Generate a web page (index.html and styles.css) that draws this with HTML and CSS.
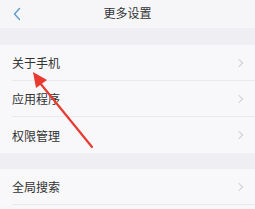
FILE: index.html
```html
<!DOCTYPE html>
<html>
<head>
<meta charset="utf-8">
<link rel="stylesheet" href="styles.css">
</head>
<body>
<div class="page">
  <div class="header">
    <svg class="back" width="10" height="14" viewBox="0 0 10 14"><path d="M7.5 1.5 L2.5 7 L7.5 12.5" fill="none" stroke="#5d9bd0" stroke-width="1.4" stroke-linecap="round" stroke-linejoin="round"/></svg>
    <div class="title">更多设置</div>
  </div>
  <div class="band"></div>
  <div class="group">
    <div class="row"><span>关于手机</span><i class="chev"></i></div>
    <div class="row"><span>应用程序</span><i class="chev"></i></div>
    <div class="row last"><span>权限管理</span><i class="chev"></i></div>
  </div>
  <div class="gap"></div>
  <div class="group">
    <div class="row"><span>全局搜索</span><i class="chev"></i></div>
  </div>
  <svg class="arrow" width="255" height="209" viewBox="0 0 255 209">
    <line x1="92" y1="147" x2="40" y2="83" stroke="#e83a30" stroke-width="2.2" stroke-linecap="round"/>
    <polygon points="33,72 47,80 36,88" fill="#e83a30"/>
  </svg>
</div>
</body>
</html>
```
FILE: styles.css
```css
html, body { margin: 0; padding: 0; }
body { width: 255px; height: 209px; overflow: hidden; background: #f7f7f9; font-family: "Noto Sans CJK SC", "Noto Sans", sans-serif; }
.page { position: relative; width: 255px; height: 209px; }
.header { height: 28px; background: #f6f6f8; display: flex; align-items: center; justify-content: center; position: relative; }
.back { position: absolute; left: 12px; top: 7px; }
.title { font-size: 12px; color: #333; line-height: 1; margin-top: -2px; }
.band { height: 17px; background: #efeef3; }
.group { background: #f8f8fa; }
.row { height: 36px; margin-left: 12px; padding-right: 10px; display: flex; align-items: center; justify-content: space-between; border-bottom: 1px solid #e9e9ee; box-sizing: border-box; font-size: 12px; color: #333; }
.row.last { border-bottom: none; }
.chev { width: 5px; height: 5px; border-right: 1.2px solid #cfcfd4; border-top: 1.2px solid #cfcfd4; transform: rotate(45deg); margin-right: 3px; }
.gap { height: 16px; background: #efeef3; }
.arrow { position: absolute; left: 0; top: 0; }
```
